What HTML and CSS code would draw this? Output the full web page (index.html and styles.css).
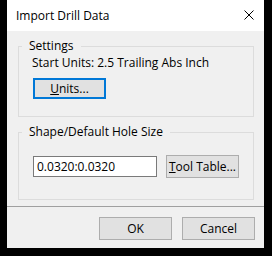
FILE: index.html
```html
<!DOCTYPE html>
<html lang="en">
<head>
    <meta charset="UTF-8">
    <meta name="viewport" content="width=device-width, initial-scale=1.0">
    <title>Import Drill Data</title>
    <link rel="stylesheet" href="styles.css">
</head>
<body>

<div class="window">
    <div class="titlebar">
        <span class="title">Import Drill Data</span>
        <svg class="close" width="10" height="10" viewBox="0 0 10 10">
            <path d="M0.5 0.5 L9.5 9.5 M9.5 0.5 L0.5 9.5" stroke="#000" stroke-width="1" fill="none"/>
        </svg>
    </div>

    <div class="main">
        <fieldset class="group group-settings">
            <legend>Settings</legend>
            <div class="info">Start Units: 2.5 Trailing Abs Inch</div>
            <button class="btn btn-focus btn-units"><u>U</u>nits...</button>
        </fieldset>

        <fieldset class="group group-hole">
            <legend>Shape/Default Hole Size</legend>
            <div class="row">
                <input type="text" class="textbox" value="0.0320:0.0320">
                <button class="btn"><u>T</u>ool Table...</button>
            </div>
        </fieldset>
    </div>

    <div class="footer">
        <button class="btn">OK</button>
        <button class="btn">Cancel</button>
    </div>
</div>

</body>
</html>
```

FILE: styles.css
```css
body {
    margin: 0;
    width: 272px;
    height: 256px;
    background-color: #000;
    font-family: "Open Sans", "Noto Sans", sans-serif;
    font-size: 12px;
    color: #000;
}
.window {
    margin-left: 7px;
    width: 257px;
    height: 248px;
    background-color: #f0f0f0;
    display: flex;
    flex-direction: column;
}
.titlebar {
    height: 31px;
    flex: none;
    background-color: #fff;
    display: flex;
    align-items: center;
    justify-content: space-between;
    padding: 0 10px 0 9px;
}
.title {
    font-size: 12px;
    line-height: 16px;
}
.close {
    display: block;
    margin-top: -1px;
}
.main {
    flex: 1;
    padding: 7px 10px 0 11px;
}
.group {
    margin: 0;
    border: 1px solid #dcdcdc;
    padding: 0 10px 0 14px;
    min-width: 0;
}
.group legend {
    margin-left: -11px;
    padding: 0 7px;
    line-height: 16px;
}
.group-settings {
    padding-top: 1px;
    padding-bottom: 17px;
}
.group-hole {
    margin-top: 7px;
    padding-top: 15px;
    padding-bottom: 21px;
}
.info {
    line-height: 16px;
    margin-left: -1px;
}
.row {
    display: flex;
    align-items: center;
    gap: 9px;
}
.btn {
    width: 73px;
    height: 23px;
    padding: 0;
    font-family: inherit;
    font-size: 12px;
    color: #000;
    background-color: #e1e1e1;
    border: 1px solid #adadad;
}
.btn-focus {
    border: 2px solid #0078d7;
}
.btn-units {
    display: block;
    margin-top: 7px;
    width: 73px;
    height: 21px;
}
.textbox {
    width: 124px;
    height: 21px;
    box-sizing: border-box;
    margin: 0;
    padding: 0 3px;
    font-family: inherit;
    font-size: 12px;
    border: 1px solid #7a7a7a;
    background-color: #fff;
}
.footer {
    flex: none;
    border-top: 1px solid #a0a0a0;
    padding: 10px 9px 8px 0;
    display: flex;
    justify-content: flex-end;
    gap: 10px;
}
```
